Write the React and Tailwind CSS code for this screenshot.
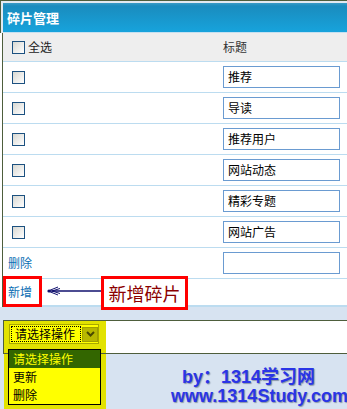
import React from "react";

const cjk = "[font-family:'Noto_Sans_CJK_SC','Liberation_Sans',sans-serif]";

function Box() {
  return (
    <span className="inline-block w-[13px] h-[13px] border border-[#1c5180] bg-[linear-gradient(135deg,#d8d8d2,#ffffff)]" />
  );
}

export default function App() {
  const rows = ["推荐", "导读", "推荐用户", "网站动态", "精彩专题", "网站广告"];

  return (
    <div className={`w-[347px] h-[409px] overflow-hidden bg-[#d7e3f1] relative text-[12px] leading-none ${cjk}`}>
      {/* top frame + title bar */}
      <div className="border-t border-l border-[#4e5e3c] pt-[2px] pl-[2px] bg-[#e2eaf1]">
        <div className="h-[30px] border-b border-[#c6e0f0] bg-[linear-gradient(#3a9cc6_0px,#1a8cbe_3px,#17a3dc_100%)] flex items-center pl-[4px]">
          <span className="text-white font-bold text-[13px]">碎片管理</span>
        </div>
      </div>

      {/* list */}
      <div className="bg-white">
        <div className="ml-[2px] border-l border-[#4e5e3c]">
          <div className="h-[29px] bg-[#eeeeee] border-b border-[#bcdcf0] grid grid-cols-[220px_1fr] items-center">
            <div className="flex items-center pl-[9px] gap-[3px] text-[#222]">
              <Box />
              <span>全选</span>
            </div>
            <span className="text-[#333]">标题</span>
          </div>

          {rows.map((t) => (
            <div key={t} className="h-[31px] border-b border-[#bcdcf0] grid grid-cols-[220px_1fr] items-center">
              <div className="pl-[9px] flex items-center">
                <Box />
              </div>
              <div className="w-[117px] h-[22px] border border-[#6a9bd1] bg-white flex items-center pl-[4px] text-black">
                {t}
              </div>
            </div>
          ))}

          <div className="h-[31px] border-b border-[#bcdcf0] grid grid-cols-[220px_1fr] items-center">
            <span className="pl-[5px] text-[#0a6eb4]">删除</span>
            <div className="w-[117px] h-[22px] border border-[#6a9bd1] bg-white" />
          </div>

          <div className="h-[28px] border-b-2 border-[#bcdcf0] flex items-center relative">
            <span className="pl-[5px] text-[#0a6eb4]">新增</span>
            {/* annotation overlay */}
            <div className="absolute left-0 top-[-3px] w-[39px] h-[31px] border-[3px] border-[#ff0000]" />
            <svg className="absolute left-[42px] top-[7px]" width="56" height="10" viewBox="0 0 56 10">
              <line x1="3" y1="5" x2="56" y2="5" stroke="#10106e" strokeWidth="1.5" />
              <path d="M3 5 L13 1 M3 5 L13 9 M7 5 L15 2.5 M7 5 L15 7.5" stroke="#10106e" strokeWidth="1" fill="none" />
              <circle cx="4" cy="5" r="1.6" fill="#10106e" />
            </svg>
            <div className="absolute left-[98px] top-[-3px] w-[87px] h-[34px] border-[3px] border-[#ff0000] bg-white flex items-center justify-center">
              <span className="text-[18px] text-[#8b0000]">新增碎片</span>
            </div>
          </div>
        </div>
      </div>

      {/* bottom action bar */}
      <div className="pt-[13px]">
        <div className="ml-[3px] h-[34px] border-y border-l border-[#4e5e3c] bg-white flex">
          <div className="w-[102px] bg-[#e2e200] relative">
            <div className="absolute left-[5px] top-[3px] w-[90px] h-[20px] border border-[#a8a800] bg-[#ffff00] flex items-center">
              <span className="ml-[1px] h-[16px] w-[71px] border border-dotted border-black flex items-center pl-[3px] text-black">
                请选择操作
              </span>
              <span className="ml-[1px] w-[16px] h-[15px] bg-[#b8b800] border border-[#a0a000] flex items-center justify-center">
                <svg width="9" height="6" viewBox="0 0 9 6">
                  <path d="M1 1 L4.5 4.5 L8 1" stroke="#4a4a00" strokeWidth="2" fill="none" />
                </svg>
              </span>
            </div>
            <div className="absolute left-0 top-[33px] w-full h-[56px] bg-[#e2e200]" />
            <div className="absolute left-[4px] top-[28px] w-[93px] border border-black bg-[#ffff00]">
              <div className="h-[18px] bg-[#336600] text-[#ffff00] flex items-center pl-[4px]">请选择操作</div>
              <div className="h-[18px] text-black flex items-center pl-[4px]">更新</div>
              <div className="h-[18px] text-black flex items-center pl-[4px]">删除</div>
            </div>
          </div>
        </div>
      </div>

      {/* watermark */}
      <div className="absolute left-[182px] top-[368px] text-[18px] font-bold text-[#2a35e6] [text-shadow:1px_1px_1px_#8a96a8] [font-family:'Liberation_Sans','Noto_Sans_CJK_SC',sans-serif]">
        by：1314学习网
      </div>
      <div className="absolute left-[171px] top-[387px] text-[18px] font-bold text-[#2a35e6] [text-shadow:1px_1px_1px_#8a96a8] [font-family:'Liberation_Sans','Noto_Sans_CJK_SC',sans-serif]">
        www.1314Study.com
      </div>
    </div>
  );
}
